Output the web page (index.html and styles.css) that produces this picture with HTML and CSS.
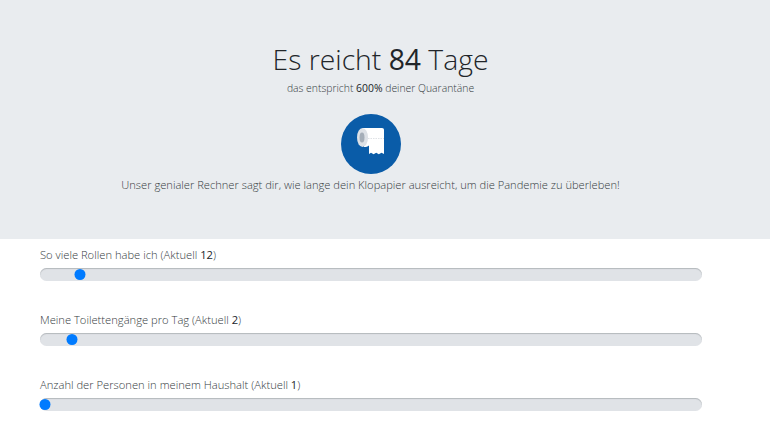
FILE: index.html
```html
<!DOCTYPE html>
<html lang="de">
<head>
<meta charset="utf-8">
<title>Klopapier-Rechner</title>
<link rel="stylesheet" href="styles.css">
</head>
<body>
<header class="hero">
  <div class="headline">
    <h1>Es reicht <b>84</b> Tage</h1>
    <p class="sub">das entspricht <b>600%</b> deiner Quarantäne</p>
  </div>
  <div class="logo">
    <svg viewBox="0 0 60 60" width="60" height="60" aria-hidden="true">
      <circle cx="30" cy="30" r="30" fill="#0a5ca8"/>
      <path d="M21.500 14H41c1.300 0 2 .8 2 2v24l-2.500-1.300-2.700 1.600-2.600-1.600-2.600 1.600-2.600-1.600-2 1.300V31.500c-1.500 1.300-3 1.500-5 1.500z" fill="#fff"/>
      <ellipse cx="21.500" cy="23.500" rx="5.500" ry="9.500" fill="#dde1e6"/>
      <ellipse cx="21" cy="23.500" rx="2.500" ry="5" fill="#a5aeb8"/>
      <path d="M27 24.500h16" stroke="#c9ced4" stroke-width=".6" stroke-dasharray="1.500 1"/>
    </svg>
  </div>
  <p class="lead">Unser genialer Rechner sagt dir, wie lange dein Klopapier ausreicht, um die Pandemie zu überleben!</p>
</header>
<main class="form">
  <div class="field">
    <label for="rollen">So viele Rollen habe ich (Aktuell <b>12</b>)</label>
    <input id="rollen" class="slider" type="range" min="1" max="208" value="12">
  </div>
  <div class="field">
    <label for="gaenge">Meine Toilettengänge pro Tag (Aktuell <b>2</b>)</label>
    <input id="gaenge" class="slider" type="range" min="1" max="25" value="2">
  </div>
  <div class="field">
    <label for="personen">Anzahl der Personen in meinem Haushalt (Aktuell <b>1</b>)</label>
    <input id="personen" class="slider" type="range" min="1" max="10" value="1">
  </div>
</main>
</body>
</html>
```
FILE: styles.css
```css
* { box-sizing: border-box; }
html, body { margin: 0; height: 100%; overflow: hidden; }
body {
  background: #fff;
  color: #363c42;
  font-family: "Open Sans", "Liberation Sans", sans-serif;
  font-weight: 300;
}
b { font-weight: 400; color: #212529; }
.hero {
  height: 239px;
  background: #e9ecef;
  width: 741px;
  box-shadow: 29px 0 0 #e9ecef;
  padding-top: 38px;
  text-align: center;
}
.headline { padding-left: 20px; }
h1 {
  margin: 0;
  font-size: 28.300px;
  line-height: 42px;
  font-weight: 300;
  color: #212529;
}
.sub {
  margin: 0;
  font-size: 10.400px;
  line-height: 16px;
}
.logo {
  margin-top: 18px;
  height: 60px;
  line-height: 0;
}
.lead {
  margin: 2px 0 0;
  font-size: 11.150px;
  line-height: 17px;
  white-space: nowrap;
}
.form { padding: 0 0 0 40px; width: 702px; }
.field {
  height: 65px;
  padding-top: 8px;
}
label {
  display: block;
  font-size: 11.200px;
  line-height: 16px;
  margin-bottom: 5px;
}
.slider {
  -webkit-appearance: none;
  appearance: none;
  display: block;
  width: 662px;
  height: 13px;
  margin: 0;
  padding: 0;
  background: #e0e3e7;
  border-radius: 7px;
  box-shadow: inset 0 1px 1px #b4b8bc;
  outline: none;
}
.slider::-webkit-slider-thumb {
  -webkit-appearance: none;
  appearance: none;
  width: 11px;
  height: 11px;
  border: 0;
  border-radius: 50%;
  background: #007bff;
  transform: translateX(-0.5px);
}
```
